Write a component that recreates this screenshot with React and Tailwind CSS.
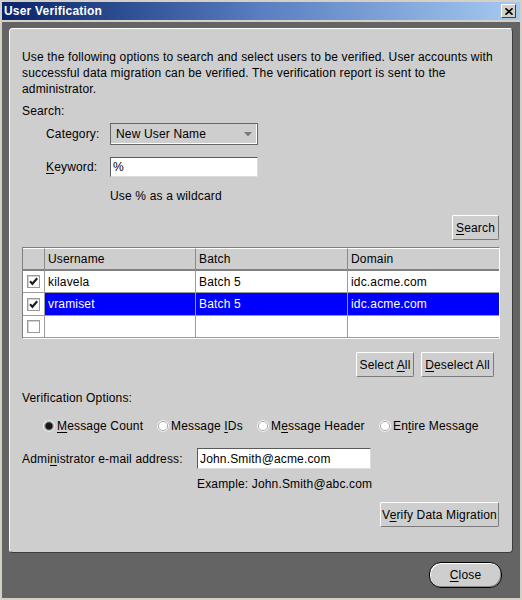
import React from "react";

function Btn({ children, className }) {
  return (
    <div
      className={
        "flex items-center justify-center bg-[#cecece] border border-t-white border-l-white border-b-[#7a7a7a] border-r-[#7a7a7a] rounded-[2px] " +
        className
      }
    >
      <span className="whitespace-nowrap">{children}</span>
    </div>
  );
}

function U({ children }) {
  return <span className="underline decoration-1 underline-offset-[2px]">{children}</span>;
}

function Check({ checked }) {
  return (
    <div className="w-[13px] h-[13px] border border-[#9a9a9a] bg-white shadow-[inset_1px_1px_0_#d4d4d4] flex items-center justify-center">
      {checked && (
        <svg width="9" height="9" viewBox="0 0 9 9">
          <path d="M1 4.2 L3.4 6.8 L8.2 1.2" stroke="#1e1e1e" strokeWidth="2.1" fill="none" />
        </svg>
      )}
    </div>
  );
}

function Radio({ checked }) {
  return (
    <svg width="12" height="12" viewBox="0 0 12 12" className="shrink-0">
      <circle cx="6" cy="6" r="5.8" fill="#ffffff" />
      <circle cx="6" cy="6" r="4.6" fill={checked ? "#6e6e6e" : "#ffffff"} stroke="#a9a9a9" strokeWidth="1" />
      {checked && <circle cx="6" cy="6" r="3.3" fill="#161616" />}
    </svg>
  );
}

function Cell({ children, sel, last, className }) {
  return (
    <div
      className={
        "flex items-center pl-[3px] whitespace-nowrap border-b border-b-[#9c9c9c] " +
        (last ? "" : "border-r border-r-[#9c9c9c] ") +
        (sel ? "bg-[#0000ff] text-white " : "bg-white ") +
        (className || "")
      }
    >
      {children}
    </div>
  );
}

function HeadCell({ children, last }) {
  return (
    <div
      className={
        "flex items-center pl-[3px] h-[23px] bg-[#cecece] border-b-2 border-b-[#808080] border-t border-t-white " +
        (last ? "" : "border-r border-r-[#8a8a8a]")
      }
    >
      {children}
    </div>
  );
}

export default function App() {
  const rows = [
    { c: true, u: "kilavela", b: "Batch 5", d: "idc.acme.com", sel: false, h: "h-[22px]" },
    { c: true, u: "vramiset", b: "Batch 5", d: "idc.acme.com", sel: true, h: "h-[23px]" },
    { c: false, u: "", b: "", d: "", sel: false, h: "h-[22px]" },
  ];
  return (
    <div className="w-[522px] h-[600px] bg-[#d4d0c8] p-[2px] flex flex-col font-['Liberation_Sans',Arial,sans-serif] text-[12px] leading-[16px] tracking-[0.16px] text-black">
      {/* title bar */}
      <div className="h-[18px] shrink-0 flex items-center bg-linear-to-r from-[#0a246a] via-[#5a7ec0] to-[#a6caf0] pl-[2px] pr-[4px]">
        <span className="font-bold text-white text-[12px] leading-[14px] tracking-[0.2px]">User Verification</span>
        <div className="ml-auto w-[15px] h-[14px] bg-[#d4d0c8] border border-t-white border-l-white border-b-[#404040] border-r-[#404040] flex items-center justify-center">
          <svg width="8" height="7" viewBox="0 0 8 7">
            <path d="M0.5 0.3 L7.5 6.7 M7.5 0.3 L0.5 6.7" stroke="#000" strokeWidth="1.6" fill="none" />
          </svg>
        </div>
      </div>
      <div className="h-[2px] shrink-0" />
      {/* content area */}
      <div className="flex-1 bg-[#646464] px-[7px] pt-[6px] flex flex-col">
        <div className="h-[525px] shrink-0 rounded-[4px] border border-t-white border-l-white border-r-[#3c3c3c] border-b-[#3c3c3c] bg-[#cecece] px-[12px] pt-[20px] flex flex-col">
          <div className="whitespace-nowrap">
            <div>Use the following options to search and select users to be verified. User accounts with</div>
            <div>successful data migration can be verified. The verification report is sent to the</div>
            <div>administrator.</div>
          </div>
          <div className="mt-[6px]">Search:</div>
          <div className="mt-[4px] flex items-center">
            <div className="ml-[24px] w-[64px]">Category:</div>
            <div className="w-[148px] h-[22px] flex items-center bg-[#cecece] border border-[#666666] shadow-[inset_-1px_-1px_0_#ffffff] pl-[5px] pr-[5px]">
              <span className="whitespace-nowrap">New User Name</span>
              <svg className="ml-auto" width="8" height="5" viewBox="0 0 8 5">
                <path d="M0 0 L8 0 L4 4.5 Z" fill="#7a7a7a" />
              </svg>
            </div>
          </div>
          <div className="mt-[12px] flex items-center">
            <div className="ml-[24px] w-[64px]">
              <U>K</U>eyword:
            </div>
            <div className="w-[148px] h-[20px] flex items-center bg-white border border-t-[#5a5a5a] border-l-[#5a5a5a] border-b-[#dcdcdc] border-r-[#dcdcdc] pl-[2px]">
              %
            </div>
          </div>
          <div className="mt-[11px] ml-[88px]">Use % as a wildcard</div>
          <Btn className="mt-[11px] self-end mr-[1px] w-[47px] h-[25px]">
            <U>S</U>earch
          </Btn>
          {/* table */}
          <div className="mt-[7px] h-[92px] border border-t-[#808080] border-l-[#808080] border-b-white border-r-white bg-white">
            <div className="grid grid-cols-[22px_151px_152px_1fr]">
              <HeadCell />
              <HeadCell>Username</HeadCell>
              <HeadCell>Batch</HeadCell>
              <HeadCell last>Domain</HeadCell>
              {rows.map((r, i) => (
                <React.Fragment key={i}>
                  <div className={"flex items-center justify-center bg-white border-b border-b-[#9c9c9c] border-r border-r-[#9c9c9c] " + r.h}>
                    <Check checked={r.c} />
                  </div>
                  <Cell sel={r.sel} className={r.h}>{r.u}</Cell>
                  <Cell sel={r.sel} className={r.h}>{r.b}</Cell>
                  <Cell sel={r.sel} last className={r.h}>{r.d}</Cell>
                </React.Fragment>
              ))}
            </div>
          </div>
          <div className="mt-[13px] self-end mr-[6px] flex gap-[7px]">
            <Btn className="w-[58px] h-[25px]">
              Select <U>A</U>ll
            </Btn>
            <Btn className="w-[73px] h-[25px]">
              <U>D</U>eselect All
            </Btn>
          </div>
          <div className="mt-[13px]">Verification Options:</div>
          <div className="mt-[12px] ml-[21px] flex items-center">
            <div className="w-[114px] flex items-center gap-[2px]">
              <Radio checked />
              <span className="whitespace-nowrap">
                <U>M</U>essage Count
              </span>
            </div>
            <div className="w-[100px] flex items-center gap-[2px]">
              <Radio />
              <span className="whitespace-nowrap">
                Message <U>I</U>Ds
              </span>
            </div>
            <div className="w-[122px] flex items-center gap-[2px]">
              <Radio />
              <span className="whitespace-nowrap">
                M<U>e</U>ssage Header
              </span>
            </div>
            <div className="flex items-center gap-[2px]">
              <Radio />
              <span className="whitespace-nowrap">
                En<U>t</U>ire Message
              </span>
            </div>
          </div>
          <div className="mt-[14px] flex items-center">
            <div className="w-[175px] whitespace-nowrap">
              Admi<U>n</U>istrator e-mail address:
            </div>
            <div className="w-[174px] h-[21px] flex items-center bg-white border border-t-[#5a5a5a] border-l-[#5a5a5a] border-b-[#dcdcdc] border-r-[#dcdcdc] pl-[2px]">
              John.Smith@acme.com
            </div>
          </div>
          <div className="mt-[7px] ml-[175px]">Example: John.Smith@abc.com</div>
          <Btn className="mt-[10px] self-end mr-[1px] w-[119px] h-[25px]">
            V<U>e</U>rify Data Migration
          </Btn>
        </div>
        <div className="mt-[9px] flex justify-end pr-[11px]">
          <div className="w-[73px] h-[26px] rounded-[12px] border border-black bg-[#cecece] shadow-[inset_1px_1px_0_#ffffff,inset_-1px_-1px_0_#8a8a8a] flex items-center justify-center">
            <span>
              <U>C</U>lose
            </span>
          </div>
        </div>
      </div>
    </div>
  );
}
